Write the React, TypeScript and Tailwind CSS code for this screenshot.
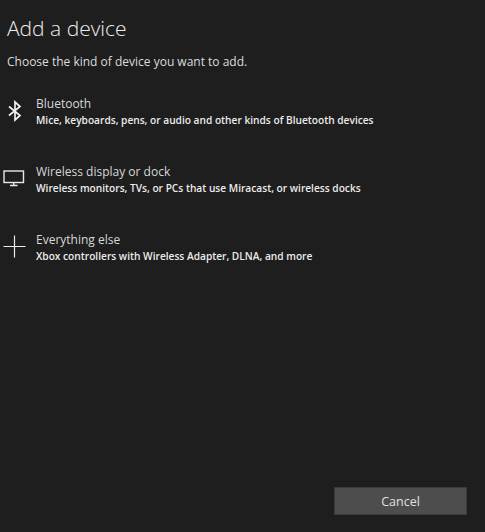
import React from "react";

const F = "font-['Open_Sans',sans-serif]";

function Row({ icon, title, desc }: { icon: React.ReactNode; title: string; desc: string }) {
  return (
    <div className="flex h-[68px] items-start">
      <div className="-ml-[4px] flex h-[28px] w-[33px] shrink-0 items-center">{icon}</div>
      <div className="flex flex-col">
        <div className="h-[16px] text-[12px] leading-[16px] text-[#d8d8d8]">{title}</div>
        <div className="h-[16px] text-[10.16px] font-semibold leading-[16px] text-[#ececec]">{desc}</div>
      </div>
    </div>
  );
}

export default function App() {
  return (
    <div className={`${F} flex h-[532px] w-[485px] flex-col bg-[#1e1e1e] pb-[17px] pl-[7px] pr-[18px] pt-[13px]`}>
      <h1 className="h-[30px] text-[21px] font-light leading-[30px] text-[#eeeeee]">Add a device</h1>
      <p className="mt-[10px] h-[17px] text-[12px] leading-[17px] text-[#dcdcdc]">Choose the kind of device you want to add.</p>
      <div className="mt-[26px] flex flex-1 flex-col">
        <Row
          title="Bluetooth"
          desc="Mice, keyboards, pens, or audio and other kinds of Bluetooth devices"
          icon={
            <svg width="16" height="22" viewBox="0 0 16 22" fill="none" stroke="#f0f0f0" strokeWidth="1.7" className="ml-[4px] mt-[2px]">
              <path d="M2 6.5 L13 15.5 L8 20 V2 L13 6.5 L2 15.5" />
            </svg>
          }
        />
        <Row
          title="Wireless display or dock"
          desc="Wireless monitors, TVs, or PCs that use Miracast, or wireless docks"
          icon={
            <svg width="22" height="17" viewBox="0 0 22 17" fill="none" stroke="#e8e8e8">
              <rect x="1" y="1" width="19.5" height="11.5" strokeWidth="1.4" />
              <path d="M7 15.5 H14.5 M10.7 13 V15" strokeWidth="1.4" />
            </svg>
          }
        />
        <Row
          title="Everything else"
          desc="Xbox controllers with Wireless Adapter, DLNA, and more"
          icon={
            <svg width="23" height="23" viewBox="0 0 23 23" fill="none" stroke="#ececec" strokeWidth="1.2">
              <path d="M0.5 11.5 H22.5 M11.5 0.5 V22.5" />
            </svg>
          }
        />
      </div>
      <div className="flex justify-end">
        <button className="h-[28px] w-[133px] border border-[#3a3a3a] bg-[#4d4d4d] pt-[2px] text-[12.5px] text-[#e0e0e0]">Cancel</button>
      </div>
    </div>
  );
}
